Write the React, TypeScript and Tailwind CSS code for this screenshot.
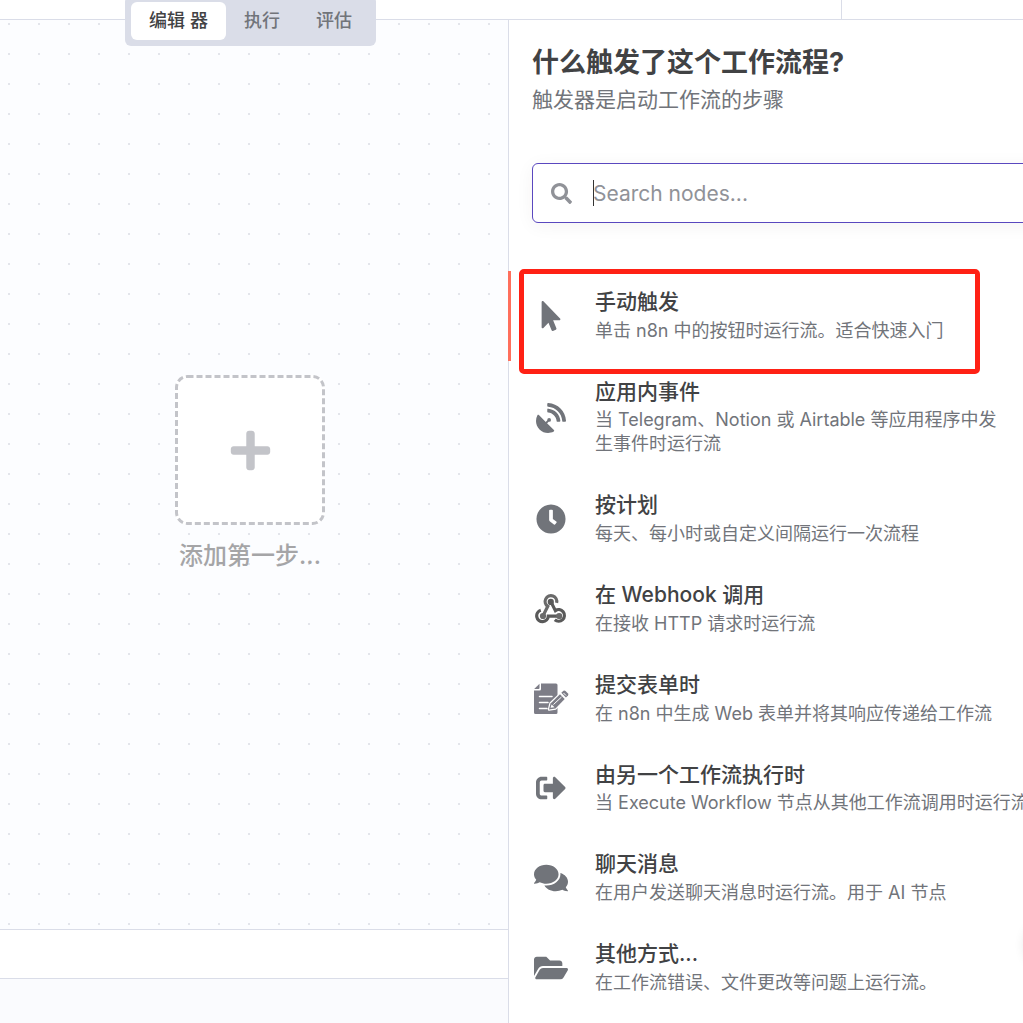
import type { ReactNode } from 'react';
import {
  FaClock,
  FaComments,
  FaFolderOpen,
  FaMousePointer,
  FaPlus,
  FaSatelliteDish,
  FaSearch,
  FaSignOutAlt,
} from 'react-icons/fa';

function WebhookIcon() {
  return (
    <svg width="32" height="32" viewBox="0 0 32 32" fill="none" stroke="#6a6a6a" strokeWidth="3.2">
      <path d="M21.600 9.800A5.800 5.800 0 1 0 12.800 13.300L8.400 22" />
      <path d="M16 8.900L20.400 17.600A5.800 5.800 0 1 1 19.800 26.800" stroke="#5a5a5a" />
      <path d="M5.800 17.300A5.800 5.800 0 1 0 13.300 23.200H24" stroke="#5a5a5a" />
      <circle cx="15.800" cy="8.900" r="3.100" fill="#5a5a5a" stroke="none" />
      <circle cx="8" cy="23" r="3.100" fill="#6a6a6a" stroke="none" />
      <circle cx="24.200" cy="23" r="3.100" fill="#6a6a6a" stroke="none" />
    </svg>
  );
}

function FormIcon() {
  return (
    <svg width="36" height="32" viewBox="0 0 36 32" fill="#7d7d87">
      <path d="M8 .5H23a1.500 1.500 0 0 1 1.500 1.500V29.500a1.500 1.500 0 0 1-1.500 1.500H2.500A1.500 1.500 0 0 1 1 29.500V7.500H6.500A1.500 1.500 0 0 0 8 6Z" />
      <path d="M6.500 .8V5A1 1 0 0 1 5.500 6H1.200Z" />
      <path d="M6.500 13.500H19M6.500 19.500H15M6.500 25.500H14" stroke="#fff" strokeWidth="1.500" strokeLinecap="round" />
      <path d="M16 26.500L17.500 20.500L27.500 11L32 15.500L22.500 25.500Z" stroke="#fff" strokeWidth="2.500" strokeLinejoin="round" />
      <path d="M16 26.500L17.500 20.500L27 11.300L31.700 16L22.500 25.500Z" />
      <path d="M17.500 24.800L18.600 21.500L21.500 24.200Z" fill="#fff" />
      <path d="M20.500 21.500L28.500 14" stroke="#fff" strokeWidth="1" />
      <path d="M28.300 9.800L30.500 7.800Q31.500 7.100 32.500 7.900L35 10.500Q35.800 11.500 35 12.500L32.900 14.500Z" />
      <path d="M30.500 10L33 12.500" stroke="#fff" strokeWidth="1" />
    </svg>
  );
}

interface Trigger {
  title: string;
  description: string;
  icon: ReactNode;
  active?: boolean;
  wrap?: boolean;
}

const triggers: Trigger[] = [
  {
    title: '手动触发',
    description: '单击 n8n 中的按钮时运行流。适合快速入门',
    icon: <FaMousePointer size={30} />,
    active: true,
  },
  {
    title: '应用内事件',
    description: '当 Telegram、Notion 或 Airtable 等应用程序中发生事件时运行流',
    icon: <FaSatelliteDish size={30} />,
    wrap: true,
  },
  {
    title: '按计划',
    description: '每天、每小时或自定义间隔运行一次流程',
    icon: <FaClock size={30} />,
  },
  {
    title: '在 Webhook 调用',
    description: '在接收 HTTP 请求时运行流',
    icon: <WebhookIcon />,
  },
  {
    title: '提交表单时',
    description: '在 n8n 中生成 Web 表单并将其响应传递给工作流',
    icon: <FormIcon />,
  },
  {
    title: '由另一个工作流执行时',
    description: '当 Execute Workflow 节点从其他工作流调用时运行流',
    icon: <FaSignOutAlt size={30} />,
  },
  {
    title: '聊天消息',
    description: '在用户发送聊天消息时运行流。用于 AI 节点',
    icon: <FaComments size={34} />,
  },
  {
    title: '其他方式...',
    description: '在工作流错误、文件更改等问题上运行流。',
    icon: <FaFolderOpen size={34} />,
  },
];

function TriggerItem({ title, description, icon, active, wrap }: Trigger) {
  return (
    <li
      className={`-ml-px flex items-center border-l-[3px] py-[18px] ${
        active ? 'border-[#ff6f5c]' : 'border-transparent'
      }`}
    >
      <div className="ml-[21px] flex w-[38px] shrink-0 justify-center text-[#71747a]">{icon}</div>
      <div className="ml-[25px] w-[436px] shrink-0">
        <h3 className="mb-1 whitespace-nowrap text-[21px] font-medium leading-[25.7px] text-[#414244]">{title}</h3>
        <p className={`text-[18px] leading-6 text-[#71747a] ${wrap ? 'w-[404px]' : 'whitespace-nowrap'}`}>
          {description}
        </p>
      </div>
    </li>
  );
}

function Tabs() {
  return (
    <nav className="absolute left-[125px] top-[-4.5px] flex h-[50px] rounded-md bg-[#dadde8] p-1.5 text-[18px] font-medium text-[#71747a]">
      <span className="flex w-[95px] items-center justify-center rounded-md bg-white text-[#414244]">编辑 器</span>
      <span className="flex w-[72px] items-center justify-center">执行</span>
      <span className="flex w-[72px] items-center justify-center">评估</span>
    </nav>
  );
}

export default function App() {
  return (
    <div className="relative flex h-[1023px] w-[1023px] flex-col overflow-hidden bg-white font-['Inter','Noto_Sans_CJK_SC',sans-serif]">
      <header className="flex h-5 shrink-0 border-b border-[#dadde8]">
        <div className="w-[842px] border-r border-[#dadde8]" />
      </header>

      <div className="flex min-h-0 flex-1">
        <div className="flex w-[508px] shrink-0 flex-col">
          <main className="flex h-[909px] flex-col items-center bg-[#fcfdff] bg-[radial-gradient(circle_at_9px_4px,#e3e5eb_1px,transparent_1.2px)] bg-[length:30px_30px] pr-2 pt-[355px]">
            <button className="flex size-[150px] items-center justify-center rounded-xl bg-white text-[#c3c4c9]">
              <svg width="150" height="150" viewBox="0 0 150 150" fill="none" className="absolute">
                <rect x="1.500" y="1.500" width="147" height="147" rx="11" stroke="currentColor" strokeWidth="3" strokeDasharray="6 3" />
              </svg>
              <FaPlus size={45} />
            </button>
            <p className="mt-[13px] text-[24px] font-medium leading-9 text-[#a5a5a7]">添加第一步...</p>
          </main>
          <div className="h-[49px] border-t border-[#dadde8]" />
          <div className="flex-1 border-t border-[#dadde8] bg-[#fafbfe]" />
        </div>

        <aside className="w-[515px] shrink-0 border-l border-[#dadde8]">
          <div className="pl-[23px] pt-[25px]">
            <h1 className="text-[27px] font-bold leading-9 text-[#414244]">什么触发了这个工作流程?</h1>
            <p className="mt-[3px] text-[21px] leading-8 text-[#71747a]">触发器是启动工作流的步骤</p>
            <div className="mt-[47px] flex h-[60px] w-[520px] items-center rounded-md border border-[#5a48bf] pl-[18px] shadow-[0_3px_18px_rgba(68,28,23,0.05)]">
              <FaSearch size={21} className="text-[#909298]" />
              <span className="ml-[21px] h-[26px] w-px bg-[#333]" />
              <span className="-ml-px pt-0.5 text-[21px] leading-8 text-[#909298]">Search nodes...</span>
            </div>
          </div>
          <ul className="mt-12">
            {triggers.map((trigger) => (
              <TriggerItem key={trigger.title} {...trigger} />
            ))}
          </ul>
        </aside>
      </div>

      <Tabs />
      {/* highlight around the first trigger */}
      <div className="absolute left-[519px] top-[269px] h-[105px] w-[461px] rounded-[5px] border-[5px] border-[#ff2115]" />
      {/* floating button past the right edge */}
      <div className="absolute left-[1025px] top-[921px] size-12 rounded-full shadow-[0_0_12px_rgba(0,0,0,0.12)]" />
    </div>
  );
}
